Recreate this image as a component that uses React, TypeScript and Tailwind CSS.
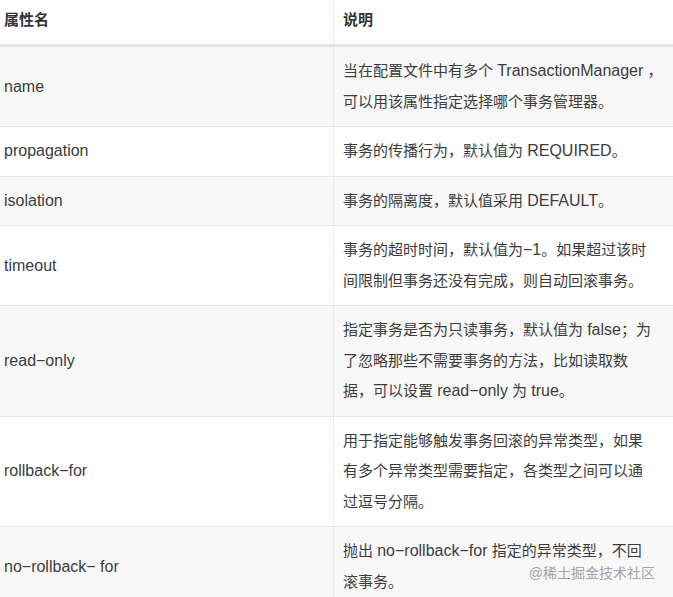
import React from "react";

const rows: { name: string; lines: string[]; gray: boolean }[] = [
  { name: "name", lines: ["当在配置文件中有多个 TransactionManager ，", "可以用该属性指定选择哪个事务管理器。"], gray: true },
  { name: "propagation", lines: ["事务的传播行为，默认值为 REQUIRED。"], gray: false },
  { name: "isolation", lines: ["事务的隔离度，默认值采用 DEFAULT。"], gray: true },
  { name: "timeout", lines: ["事务的超时时间，默认值为−1。如果超过该时", "间限制但事务还没有完成，则自动回滚事务。"], gray: false },
  { name: "read−only", lines: ["指定事务是否为只读事务，默认值为 false；为", "了忽略那些不需要事务的方法，比如读取数", "据，可以设置 read−only 为 true。"], gray: true },
  { name: "rollback−for", lines: ["用于指定能够触发事务回滚的异常类型，如果", "有多个异常类型需要指定，各类型之间可以通", "过逗号分隔。"], gray: false },
  { name: "no−rollback− for", lines: ["抛出 no−rollback−for 指定的异常类型，不回", "滚事务。"], gray: true },
];

function Mixed({ text }: { text: string }) {
  const parts = text.split(/([A-Za-z0-9−\-]+(?: [A-Za-z0-9−\-]+)*)/);
  return (
    <>
      {parts.map((p, i) =>
        /[A-Za-z0-9]/.test(p) ? (
          <span key={i} className="text-[16px]">
            {p}
          </span>
        ) : (
          <span key={i}>{p}</span>
        )
      )}
    </>
  );
}

export default function App() {
  return (
    <div
      className="relative w-[673px] h-[597px] overflow-hidden bg-white text-[15px] text-[#3c3c3c]"
      style={{ fontFamily: '"Liberation Sans", "Noto Sans CJK SC", sans-serif' }}
    >
      <div className="grid grid-cols-[334px_1fr] h-[47px] border-b-[3px] border-[#e2e2e2]">
        <div className="flex items-center pl-[4px] pb-[3px] font-bold text-[#333] border-r border-[#ececec]">属性名</div>
        <div className="flex items-center pl-[9px] pb-[3px] font-bold text-[#333]">说明</div>
      </div>
      {rows.map((r) => (
        <div
          key={r.name}
          className={`grid grid-cols-[334px_1fr] border-b border-[#e6e6e6] ${r.gray ? "bg-[#f8f8f8]" : "bg-white"}`}
        >
          <div className="flex items-center pl-[4px] text-[16px] border-r border-[#ececec]">{r.name}</div>
          <div className="pl-[9px] py-[9px] leading-[30.5px]">
            {r.lines.map((l, i) => (
              <div key={i} className="whitespace-nowrap">
                <Mixed text={l} />
              </div>
            ))}
          </div>
        </div>
      ))}
      <div className="absolute right-[18px] bottom-[17px] text-[14px] text-[#a3a3a3] leading-none">
        @稀土掘金技术社区
      </div>
    </div>
  );
}
